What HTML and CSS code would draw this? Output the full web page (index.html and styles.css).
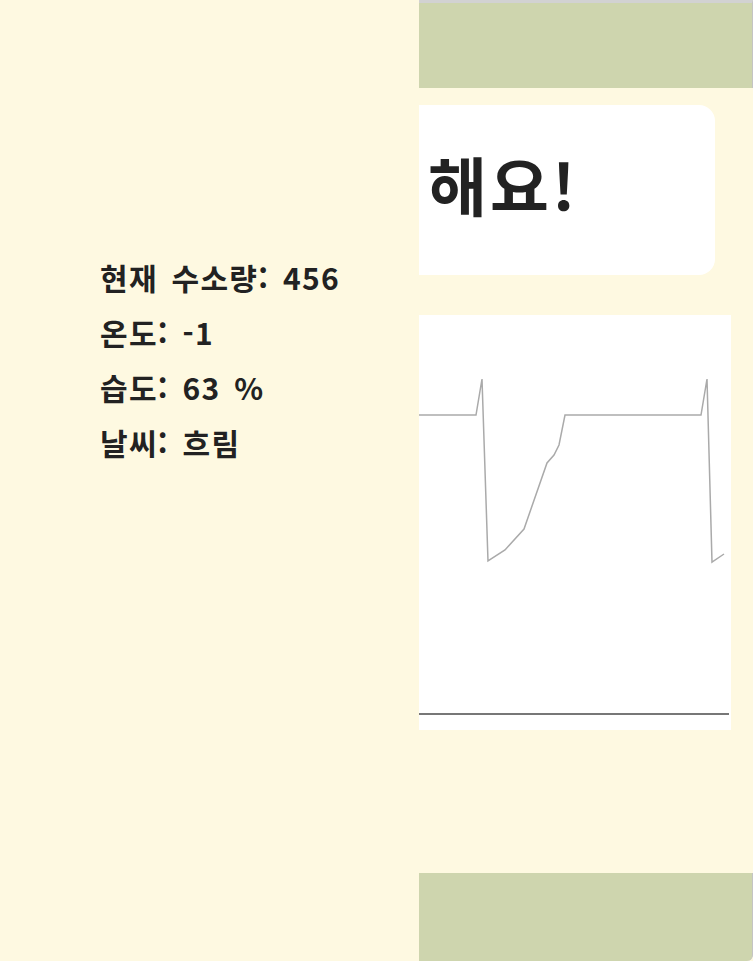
FILE: index.html
```html
<!DOCTYPE html>
<html lang="ko">
<head>
<meta charset="utf-8">
<title>수소량</title>
<link rel="stylesheet" href="styles.css">
</head>
<body>
<div class="page">
  <aside class="sidebar">
    <p class="stat">현재 수소량: 456</p>
    <p class="stat">온도: -1</p>
    <p class="stat">습도: 63 %</p>
    <p class="stat">날씨: 흐림</p>
  </aside>
  <main class="main">
    <header class="topbar"></header>
    <section class="card">
      <h1 class="headline">해요!</h1>
    </section>
    <section class="chart">
      <svg class="chart-svg" width="312" height="415" viewBox="0 0 312 415">
        <polyline class="series" points="0,100 57,100 63,64 69,246 86,235 105,214 128,148 135,140 140,130 146,100 282,100 288,64 293,247 305,239"/>
        <line class="axis" x1="0" y1="399" x2="310" y2="399"/>
      </svg>
    </section>
    <footer class="bottombar"></footer>
  </main>
</div>
</body>
</html>
```
FILE: styles.css
```css
html, body {
  margin: 0;
  padding: 0;
  background: #fef9e1;
}
body {
  font-family: "Noto Sans CJK KR", "Noto Sans", sans-serif;
  color: #222;
}
.page {
  display: flex;
  width: 753px;
  height: 961px;
  overflow: hidden;
}
.sidebar {
  width: 419px;
  flex: 0 0 419px;
  box-sizing: border-box;
  padding: 250px 0 0 100px;
  background: #fef9e1;
}
.stat {
  margin: 0;
  font-size: 30px;
  font-weight: 700;
  line-height: 55px;
  letter-spacing: 1.3px;
  word-spacing: 4px;
  white-space: nowrap;
}
.main {
  flex: 0 0 334px;
  width: 334px;
  display: flex;
  flex-direction: column;
}
.topbar {
  height: 85px;
  border-top: 3px solid #d2d2d2;
  border-right: 1px solid #c4c4c4;
  background: #ced5ae;
}
.card {
  margin-top: 17px;
  width: 296px;
  height: 170px;
  box-sizing: border-box;
  padding: 0 0 14px 9px;
  background: #fff;
  border-radius: 0 16px 16px 0;
  display: flex;
  align-items: center;
}
.headline {
  margin: 0;
  font-size: 64px;
  font-weight: 700;
  line-height: 1;
  letter-spacing: 3px;
  white-space: nowrap;
  color: #222;
}
.chart {
  margin-top: 40px;
  width: 312px;
  height: 415px;
  background: #fff;
}
.chart-svg {
  display: block;
}
.series {
  fill: none;
  stroke: #aaa;
  stroke-width: 1.5;
}
.axis {
  stroke: #777;
  stroke-width: 2;
}
.bottombar {
  margin-top: 143px;
  height: 88px;
  background: #ced5ae;
  border-right: 1px solid #c4c4c4;
  border-bottom-right-radius: 6px;
}
```
